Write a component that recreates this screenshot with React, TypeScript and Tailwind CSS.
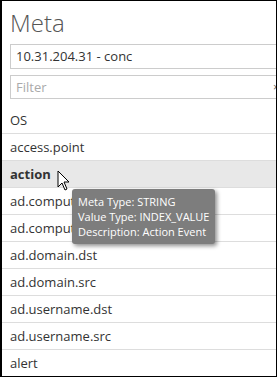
import React from "react";

const rows = [
  "OS",
  "access.point",
  "action",
  "ad.comput",
  "ad.comput",
  "ad.domain.dst",
  "ad.domain.src",
  "ad.username.dst",
  "ad.username.src",
  "alert",
];

export default function App() {
  return (
    <div
      className="relative w-[277px] h-[377px] overflow-hidden bg-white border-t border-r border-b border-l-2 border-black"
      style={{ fontFamily: '"Open Sans", "Liberation Sans", sans-serif' }}
    >
      <div className="pl-[8px] pt-[6px] text-[24px] leading-[32px] font-light text-[#555]">Meta</div>
      <div className="mt-[5px] ml-[8px] w-[290px] h-[25px] border border-[#ccc] pl-[5px] text-[13px] leading-[23px] text-[#333]">
        10.31.204.31 - conc
      </div>
      <div className="relative mt-[6px] ml-[8px] w-[290px] h-[24px] border border-[#ccc] pl-[5px] text-[13px] leading-[22px] text-[#aaa]">
        Filter
        <span className="absolute left-[262px] top-[1px] text-[11px] leading-[20px] text-[#666]">×</span>
      </div>
      <div className="mt-[8px] flex flex-col">
        {rows.map((r, i) => (
          <div
            key={i}
            className={
              "h-[27px] border-b border-[#ddd] pl-[8px] text-[13px] leading-[26px] text-[#333] " +
              (r === "action" ? "bg-[#e8e8e8] font-bold" : "")
            }
          >
            {r}
          </div>
        ))}
      </div>
      <svg
        className="absolute left-[55px] top-[169px]"
        width="14"
        height="22"
        viewBox="0 0 14 22"
      >
        <path
          d="M1 1 L1 17 L5 13 L8 20 L10 19 L7 12 L12 12 Z"
          fill="white"
          stroke="black"
          strokeWidth="1"
          strokeLinejoin="miter"
        />
      </svg>
      <div className="absolute left-[70px] top-[188px] w-[143px] h-[55px] rounded-[3px] bg-[#7d7d7d] shadow-[2px_2px_4px_rgba(0,0,0,0.45)] pl-[6px] pt-[5px] text-[11px] leading-[15px] text-white whitespace-nowrap">
        <div>Meta Type: STRING</div>
        <div>Value Type: INDEX_VALUE</div>
        <div>Description: Action Event</div>
      </div>
    </div>
  );
}
